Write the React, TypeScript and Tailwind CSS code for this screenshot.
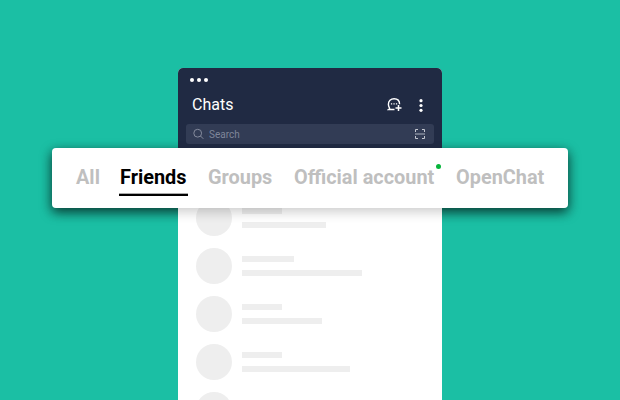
const rows = [
  { title: 'w-10', body: 'w-[84px]' },
  { title: 'w-[52px]', body: 'w-[120px]' },
  { title: 'w-10', body: 'w-20' },
  { title: 'w-10', body: 'w-[108px]' },
  { title: 'w-[52px]', body: 'w-[84px]' },
];

const tabs = [
  { label: 'All', place: 'ml-6 w-[44px]' },
  { label: 'Friends', place: 'w-[88px]', active: true },
  { label: 'Groups', place: 'w-[86px]' },
  { label: 'Official account', place: 'w-[162px]', dot: true },
  { label: 'OpenChat', place: 'w-[90px]' },
];

function NewChatIcon() {
  return (
    <svg className="h-4 w-4" viewBox="0 0 16 16" fill="none" stroke="#fff">
      <path d="M7.500 12.500H1.800c.8-.5 1-1 .6-1.700C1.800 9.700 1.400 8.500 1.400 7.200c0-3.300 2.300-5.500 5.700-5.500s5.500 2.100 5.500 5.500" strokeWidth="1.400" />
      <path d="M3.900 6.900h1.300M6.400 6.900h1.300M8.900 6.900h1.300" strokeWidth="1.200" />
      <path d="M11.500 8v6M8.500 11h6" strokeWidth="1.500" />
    </svg>
  );
}

function SearchIcon() {
  return (
    <svg className="h-3 w-3" viewBox="0 0 12 12" fill="none" stroke="#858b9d">
      <circle cx="4.700" cy="5.200" r="3.900" />
      <path d="M7.500 8 10.300 10.800" />
    </svg>
  );
}

function ScanIcon() {
  return (
    <svg className="h-3 w-3" viewBox="0 0 12 12" fill="none">
      <path d="M4 1.500H1.500V4M8 1.500h2.500V4M4 10.500H1.500V8M8 10.500h2.500V8" stroke="#c4c7d0" strokeWidth="1" />
      <path d="M1 6h10" stroke="#858b9d" strokeWidth="1.600" />
    </svg>
  );
}

function KebabIcon() {
  return (
    <svg className="h-[13px] w-1" viewBox="0 0 4 13" fill="#fff">
      <circle cx="2" cy="1.700" r="1.600" />
      <circle cx="2" cy="6.500" r="1.600" />
      <circle cx="2" cy="11.300" r="1.600" />
    </svg>
  );
}

function Phone() {
  return (
    <div className="relative h-[332px] w-[264px] overflow-hidden rounded-t-[5px] bg-white">
      <header className="flex h-20 flex-col bg-[#202a43] px-2">
        <div className="flex gap-[3px] pt-2.5 pl-1">
          <span className="h-1 w-1 rounded-full bg-white" />
          <span className="h-1 w-1 rounded-full bg-white" />
          <span className="h-1 w-1 rounded-full bg-white" />
        </div>
        <div className="mt-[13px] flex h-5 items-center pl-1.5">
          <h1 className="text-[16px] leading-5 text-white">Chats</h1>
          <span className="ml-auto">
            <NewChatIcon />
          </span>
          <span className="mr-[11px] ml-4">
            <KebabIcon />
          </span>
        </div>
        <div className="mt-[9px] flex h-5 items-center rounded-[3px] bg-[#323c55] pr-2 pl-[7px]">
          <SearchIcon />
          <span className="ml-1 pt-0.5 text-[10px] leading-3 text-[#7f8699]">Search</span>
          <span className="ml-auto">
            <ScanIcon />
          </span>
        </div>
      </header>
      <ul className="flex flex-col gap-3 pt-[52px] pl-[18px]">
        {rows.map((row, i) => (
          <li key={i} className="flex h-9 items-start gap-2.5">
            <span className="h-9 w-9 rounded-full bg-[#eee]" />
            <span className="flex flex-col gap-2 pt-2">
              <span className={`h-1.5 bg-[#eee] ${row.title}`} />
              <span className={`h-1.5 bg-[#eee] ${row.body}`} />
            </span>
          </li>
        ))}
      </ul>
    </div>
  );
}

export default function App() {
  return (
    <main className="relative flex h-[400px] w-[620px] justify-center overflow-hidden bg-[#1bbfa4] pt-[68px] font-['Roboto','Liberation_Sans',sans-serif]">
      <div className="absolute top-[148px] left-[52px] h-[60px] w-[516px] rounded shadow-[0_4px_12px_rgba(0,0,0,0.6)]" />
      <Phone />
      <nav className="absolute top-[148px] left-[52px] flex h-[60px] w-[516px] rounded bg-white shadow-[0_4px_12px_rgba(0,0,0,0.2)]">
        {tabs.map((tab) => (
          <div key={tab.label} className={`pt-[18px] whitespace-nowrap ${tab.place}`}>
            <span
              className={`relative inline-block text-[19.900px] leading-6 font-bold ${tab.active ? 'text-black' : 'text-[#bfbfbf]'}`}
            >
              {tab.label}
              {tab.active && (
                <span className="absolute top-[27px] -right-px -left-px h-[3px] border-t border-[#aaa] bg-black" />
              )}
              {tab.dot && <span className="absolute -top-0.5 -right-[7px] h-[5px] w-[5px] rounded-full bg-[#07b53b]" />}
            </span>
          </div>
        ))}
      </nav>
    </main>
  );
}
